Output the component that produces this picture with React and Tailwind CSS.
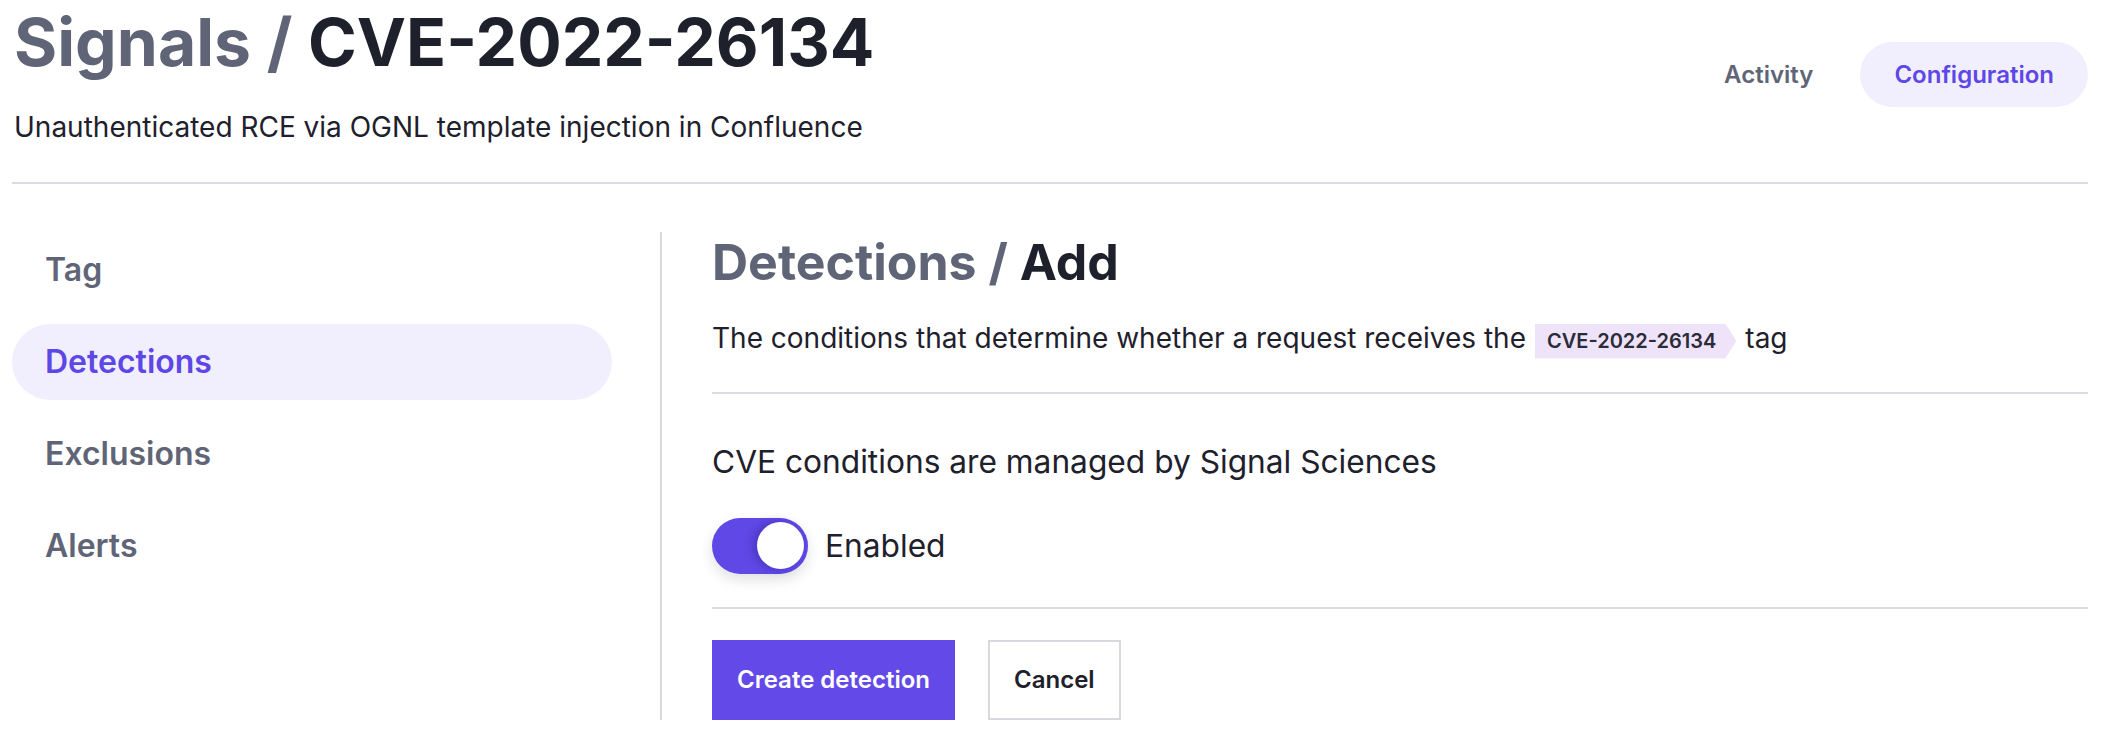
import { useState } from 'react';

const navItems = ['Tag', 'Detections', 'Exclusions', 'Alerts'];

const App = () => {
  const [active, setActive] = useState('Detections');
  const [tab, setTab] = useState('Configuration');
  const [enabled, setEnabled] = useState(true);

  return (
    <div className="min-h-screen bg-white font-['Inter',sans-serif] text-[#1e202c] pl-[12px] pr-[22px]">
      {/* Header */}
      <header className="pt-[4px]">
        <div className="flex items-start justify-between">
          <div className="pl-[2px]">
            <h1 className="text-[66px] leading-[76px] font-bold">
              <span className="text-[#5f6577]">Signals / </span>
              <span className="text-[#1e202c]">CVE-2022-26134</span>
            </h1>
            <p className="mt-[30px] text-[28px] leading-[34px] text-[#1e202c]">
              Unauthenticated RCE via OGNL template injection in Confluence
            </p>
          </div>
          <nav className="mt-[38px] flex items-center gap-[13px]">
            {['Activity', 'Configuration'].map((t) => (
              <button
                key={t}
                onClick={() => setTab(t)}
                className={`h-[65px] px-[34px] rounded-full text-[24px] font-semibold ${
                  tab === t ? 'bg-[#f1effd] text-[#5d47e6]' : 'text-[#5f6577]'
                }`}
              >
                {t}
              </button>
            ))}
          </nav>
        </div>
        <div className="mt-[38px] h-[2px] bg-[#dadae0]" />
      </header>

      {/* Body */}
      <div className="mt-[48px] flex">
        {/* Sidebar */}
        <aside className="w-[600px] shrink-0 flex flex-col gap-[16px]">
          {navItems.map((item) => (
            <button
              key={item}
              onClick={() => setActive(item)}
              className={`h-[76px] rounded-full pl-[33px] text-left text-[32px] leading-[38px] font-semibold ${
                active === item ? 'bg-[#f1effd] text-[#5d47e6]' : 'text-[#5f6577]'
              }`}
            >
              {item}
            </button>
          ))}
        </aside>

        <div className="ml-[48px] w-[2px] bg-[#d8d8de]" />

        {/* Main */}
        <main className="ml-[50px] flex-1">
          <h2 className="text-[50px] leading-[61px] font-bold">
            <span className="text-[#5f6577]">Detections / </span>
            <span className="text-[#1e202c]">Add</span>
          </h2>

          <div className="mt-[28px] flex items-baseline text-[28px] leading-[34px] text-[#1e202c]">
            <span>The conditions that determine whether a request receives the</span>
            <span className="ml-[9px] inline-flex items-center h-[35px] pl-[12px] pr-[20px] bg-[#efe3fa] text-[20px] leading-[24px] font-semibold text-[#2a2c38] [clip-path:polygon(0_0,calc(100%-11px)_0,100%_50%,calc(100%-11px)_100%,0_100%)]">
              CVE-2022-26134
            </span>
            <span className="ml-[9px]">tag</span>
          </div>

          <div className="mt-[33px] h-[2px] bg-[#dadae0]" />

          <p className="mt-[49px] text-[31.7px] leading-[38px]">
            CVE conditions are managed by Signal Sciences
          </p>

          <div className="mt-[37px] flex items-center gap-[17px]">
            <button
              onClick={() => setEnabled(!enabled)}
              className={`w-[96px] h-[56px] rounded-full flex items-center px-[4px] shadow-[0_6px_14px_rgba(0,0,0,0.12)] ${
                enabled ? 'bg-[#5f48e6] justify-end' : 'bg-[#c9c9d1] justify-start'
              }`}
            >
              <span className="w-[47px] h-[47px] rounded-full bg-white shadow-[-4px_0_8px_rgba(40,20,120,0.35)]" />
            </button>
            <span className="text-[31.7px] leading-[38px]">Enabled</span>
          </div>

          <div className="mt-[33px] h-[2px] bg-[#dadae0]" />

          <div className="mt-[31px] flex gap-[33px]">
            <button className="h-[80px] px-[25px] bg-[#634ae8] text-white text-[24px] font-semibold">
              Create detection
            </button>
            <button className="h-[80px] px-[24px] border-2 border-[#d8d8de] bg-white text-[#1e202c] text-[24px] font-semibold">
              Cancel
            </button>
          </div>
        </main>
      </div>
    </div>
  );
};

export default App;
